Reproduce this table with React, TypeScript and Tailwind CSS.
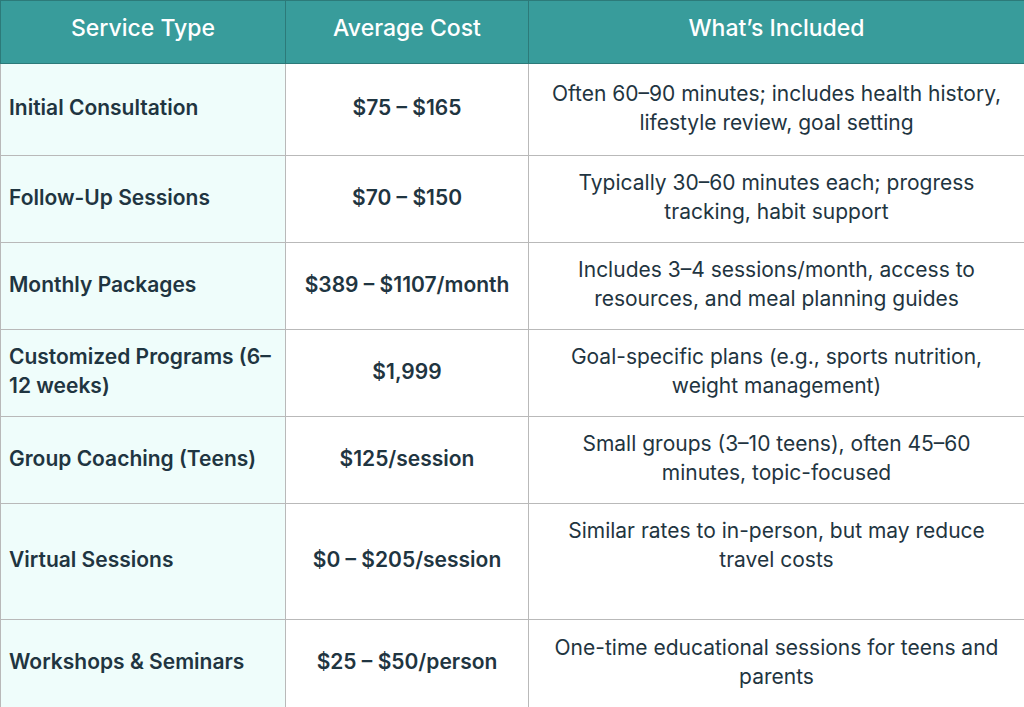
const rows = [
  {
    service: "Initial Consultation",
    cost: "$75 – $165",
    included: "Often 60–90 minutes; includes health history, lifestyle review, goal setting",
    h: "h-[92px]",
  },
  {
    service: "Follow-Up Sessions",
    cost: "$70 – $150",
    included: "Typically 30–60 minutes each; progress tracking, habit support",
    h: "h-[87px]",
  },
  {
    service: "Monthly Packages",
    cost: "$389 – $1107/month",
    included: "Includes 3–4 sessions/month, access to resources, and meal planning guides",
    h: "h-[87px]",
  },
  {
    service: "Customized Programs (6–12 weeks)",
    cost: "$1,999",
    included: "Goal-specific plans (e.g., sports nutrition, weight management)",
    h: "h-[87px]",
  },
  {
    service: "Group Coaching (Teens)",
    cost: "$125/session",
    included: "Small groups (3–10 teens), often 45–60 minutes, topic-focused",
    h: "h-[87px]",
  },
  {
    service: "Virtual Sessions",
    cost: "$0 – $205/session",
    included: "Similar rates to in-person, but may reduce travel costs",
    h: "h-[116px]",
    extra: true,
  },
  {
    service: "Workshops & Seminars",
    cost: "$25 – $50/person",
    included: "One-time educational sessions for teens and parents",
    h: "h-[88px]",
  },
];

export default function App() {
  return (
    <div
      className="w-[1024px] h-[707px] overflow-hidden bg-white text-[#1f3541]"
      style={{ fontFamily: "Inter, 'Noto Sans', sans-serif" }}
    >
      <table className="w-[1024px] table-fixed border-collapse text-[21px] leading-[29px]">
        <colgroup>
          <col className="w-[285px]" />
          <col className="w-[243px]" />
          <col className="w-[496px]" />
        </colgroup>
        <thead>
          <tr className="h-[63px] bg-[#389c9b] text-white">
            <th className="border border-[#2c7a79] pb-2 text-[23px] font-medium">Service Type</th>
            <th className="border border-[#2c7a79] pb-2 text-[23px] font-medium">Average Cost</th>
            <th className="border border-[#2c7a79] pb-2 text-[23px] font-medium">What’s Included</th>
          </tr>
        </thead>
        <tbody>
          {rows.map((r) => (
            <tr key={r.service} className={r.h}>
              <td className="border border-[#b9b9b9] bg-[#effdfb] px-2 pb-1 text-left font-semibold">
                {r.service}
              </td>
              <td className="border border-[#b9b9b9] px-2 pb-1 text-center font-semibold">{r.cost}</td>
              <td className="border border-[#b9b9b9] px-4 pb-1 text-center">
                <p className={r.extra ? "pb-[29px]" : ""}>{r.included}</p>
              </td>
            </tr>
          ))}
        </tbody>
      </table>
    </div>
  );
}
